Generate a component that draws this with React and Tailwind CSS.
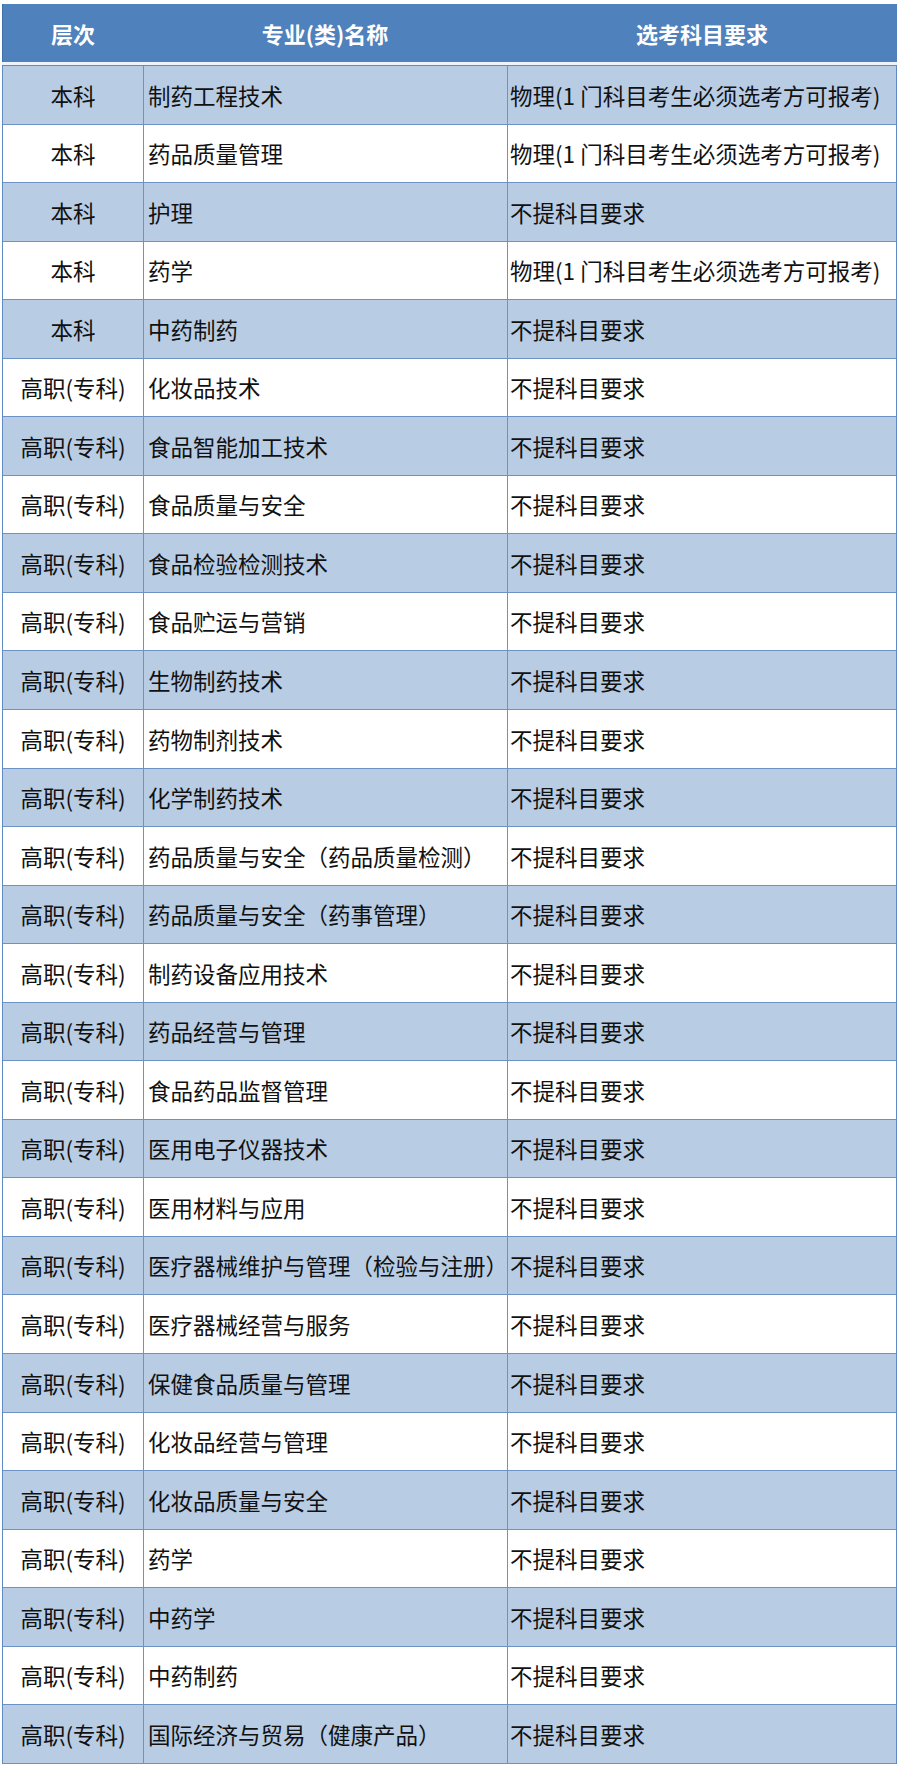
import React from 'react';

const rows = [
    ['本科', '制药工程技术', '物理(1 门科目考生必须选考方可报考)'],
    ['本科', '药品质量管理', '物理(1 门科目考生必须选考方可报考)'],
    ['本科', '护理', '不提科目要求'],
    ['本科', '药学', '物理(1 门科目考生必须选考方可报考)'],
    ['本科', '中药制药', '不提科目要求'],
    ['高职(专科)', '化妆品技术', '不提科目要求'],
    ['高职(专科)', '食品智能加工技术', '不提科目要求'],
    ['高职(专科)', '食品质量与安全', '不提科目要求'],
    ['高职(专科)', '食品检验检测技术', '不提科目要求'],
    ['高职(专科)', '食品贮运与营销', '不提科目要求'],
    ['高职(专科)', '生物制药技术', '不提科目要求'],
    ['高职(专科)', '药物制剂技术', '不提科目要求'],
    ['高职(专科)', '化学制药技术', '不提科目要求'],
    ['高职(专科)', '药品质量与安全（药品质量检测）', '不提科目要求'],
    ['高职(专科)', '药品质量与安全（药事管理）', '不提科目要求'],
    ['高职(专科)', '制药设备应用技术', '不提科目要求'],
    ['高职(专科)', '药品经营与管理', '不提科目要求'],
    ['高职(专科)', '食品药品监督管理', '不提科目要求'],
    ['高职(专科)', '医用电子仪器技术', '不提科目要求'],
    ['高职(专科)', '医用材料与应用', '不提科目要求'],
    ['高职(专科)', '医疗器械维护与管理（检验与注册）', '不提科目要求'],
    ['高职(专科)', '医疗器械经营与服务', '不提科目要求'],
    ['高职(专科)', '保健食品质量与管理', '不提科目要求'],
    ['高职(专科)', '化妆品经营与管理', '不提科目要求'],
    ['高职(专科)', '化妆品质量与安全', '不提科目要求'],
    ['高职(专科)', '药学', '不提科目要求'],
    ['高职(专科)', '中药学', '不提科目要求'],
    ['高职(专科)', '中药制药', '不提科目要求'],
    ['高职(专科)', '国际经济与贸易（健康产品）', '不提科目要求'],
];

const App = () => {
    return (
        <div
            className="w-[900px] h-[1768px] bg-white pt-[4px] pl-[2px] pr-[3px] text-[#111]"
            style={{ fontFamily: '"Noto Sans CJK SC", "Noto Sans", sans-serif' }}
        >
            {/* Header */}
            <div className="h-[58px] bg-[#4f81bd] border-l border-[#3f6ea8] grid grid-cols-[140px_364px_1fr] items-center text-center text-white font-bold text-[22px]">
                <div>层次</div>
                <div>专业(类)名称</div>
                <div>选考科目要求</div>
            </div>
            <div className="h-[3px] bg-[#eef3f9]" />

            {/* Body */}
            <div className="border-l border-r border-t border-[#5f8ac2]">
                {rows.map((row, i) => (
                    <div
                        key={i}
                        className={`h-[58.55px] grid grid-cols-[141px_364px_1fr] border-b border-[#6d93c6] text-[22.5px] leading-none ${i % 2 === 0 ? 'bg-[#b8cce4]' : 'bg-white'}`}
                    >
                        <div className="flex items-center justify-center border-r border-[#6d93c6] whitespace-nowrap">{row[0]}</div>
                        <div className="flex items-center pl-[4px] border-r border-[#6d93c6] whitespace-nowrap">{row[1]}</div>
                        <div className="flex items-center pl-[2px] whitespace-nowrap">{row[2]}</div>
                    </div>
                ))}
            </div>
        </div>
    );
};

export default App;
